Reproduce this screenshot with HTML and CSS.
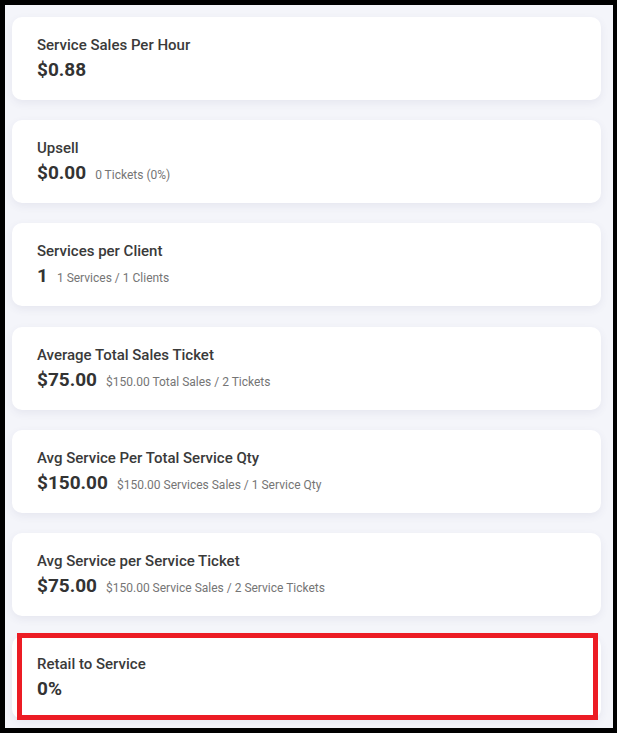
FILE: index.html
```html
<!DOCTYPE html>
<html lang="en">
<head>
    <meta charset="UTF-8">
    <meta name="viewport" content="width=device-width, initial-scale=1.0">
    <title>Sales Metrics</title>
    <link rel="stylesheet" href="styles.css">
</head>
<body>
    <div class="frame">
        <div class="metrics">
            <div class="card">
                <div class="card-title">Service Sales Per Hour</div>
                <div class="card-value"><span class="amount">$0.88</span></div>
            </div>

            <div class="card">
                <div class="card-title">Upsell</div>
                <div class="card-value"><span class="amount">$0.00</span><span class="detail">0 Tickets (0%)</span></div>
            </div>

            <div class="card">
                <div class="card-title">Services per Client</div>
                <div class="card-value"><span class="amount">1</span><span class="detail">1 Services / 1 Clients</span></div>
            </div>

            <div class="card">
                <div class="card-title">Average Total Sales Ticket</div>
                <div class="card-value"><span class="amount">$75.00</span><span class="detail">$150.00 Total Sales / 2 Tickets</span></div>
            </div>

            <div class="card">
                <div class="card-title">Avg Service Per Total Service Qty</div>
                <div class="card-value"><span class="amount">$150.00</span><span class="detail">$150.00 Services Sales / 1 Service Qty</span></div>
            </div>

            <div class="card">
                <div class="card-title">Avg Service per Service Ticket</div>
                <div class="card-value"><span class="amount">$75.00</span><span class="detail">$150.00 Service Sales / 2 Service Tickets</span></div>
            </div>

            <div class="card highlighted">
                <div class="card-title">Retail to Service</div>
                <div class="card-value"><span class="amount">0%</span></div>
            </div>
        </div>
    </div>
</body>
</html>
```

FILE: styles.css
```css
* {
    margin: 0;
    padding: 0;
    box-sizing: border-box;
}

body {
    font-family: Roboto, 'Liberation Sans', Arial, sans-serif;
    background: #000;
    width: 617px;
    height: 733px;
    padding: 5px 4px 5px 5px;
    overflow: hidden;
}

.frame {
    background: #f4f5fa;
    height: 723px;
    padding: 12px 12px 0 7px;
    overflow: hidden;
}

.metrics {
    display: flex;
    flex-direction: column;
    gap: 20.2px;
}

.card {
    position: relative;
    background: #fff;
    border-radius: 10px;
    height: 83px;
    padding: 17px 25px 18px;
    box-shadow: 0 3px 8px rgba(60, 70, 110, 0.08);
}

.card-title {
    font-size: 15px;
    font-weight: 500;
    line-height: 22px;
    color: #3a3a3a;
}

.card-value {
    display: flex;
    align-items: baseline;
    gap: 9px;
    margin-top: 1px;
    line-height: 25px;
}

.amount {
    font-size: 19px;
    font-weight: 700;
    color: #333;
}

.detail {
    font-size: 12px;
    color: #757575;
}

/* red outline drawn over the last card */
.highlighted::after {
    content: '';
    position: absolute;
    left: 5px;
    right: 3px;
    top: -3px;
    bottom: -1px;
    border: 5px solid #ec1c24;
}
```
